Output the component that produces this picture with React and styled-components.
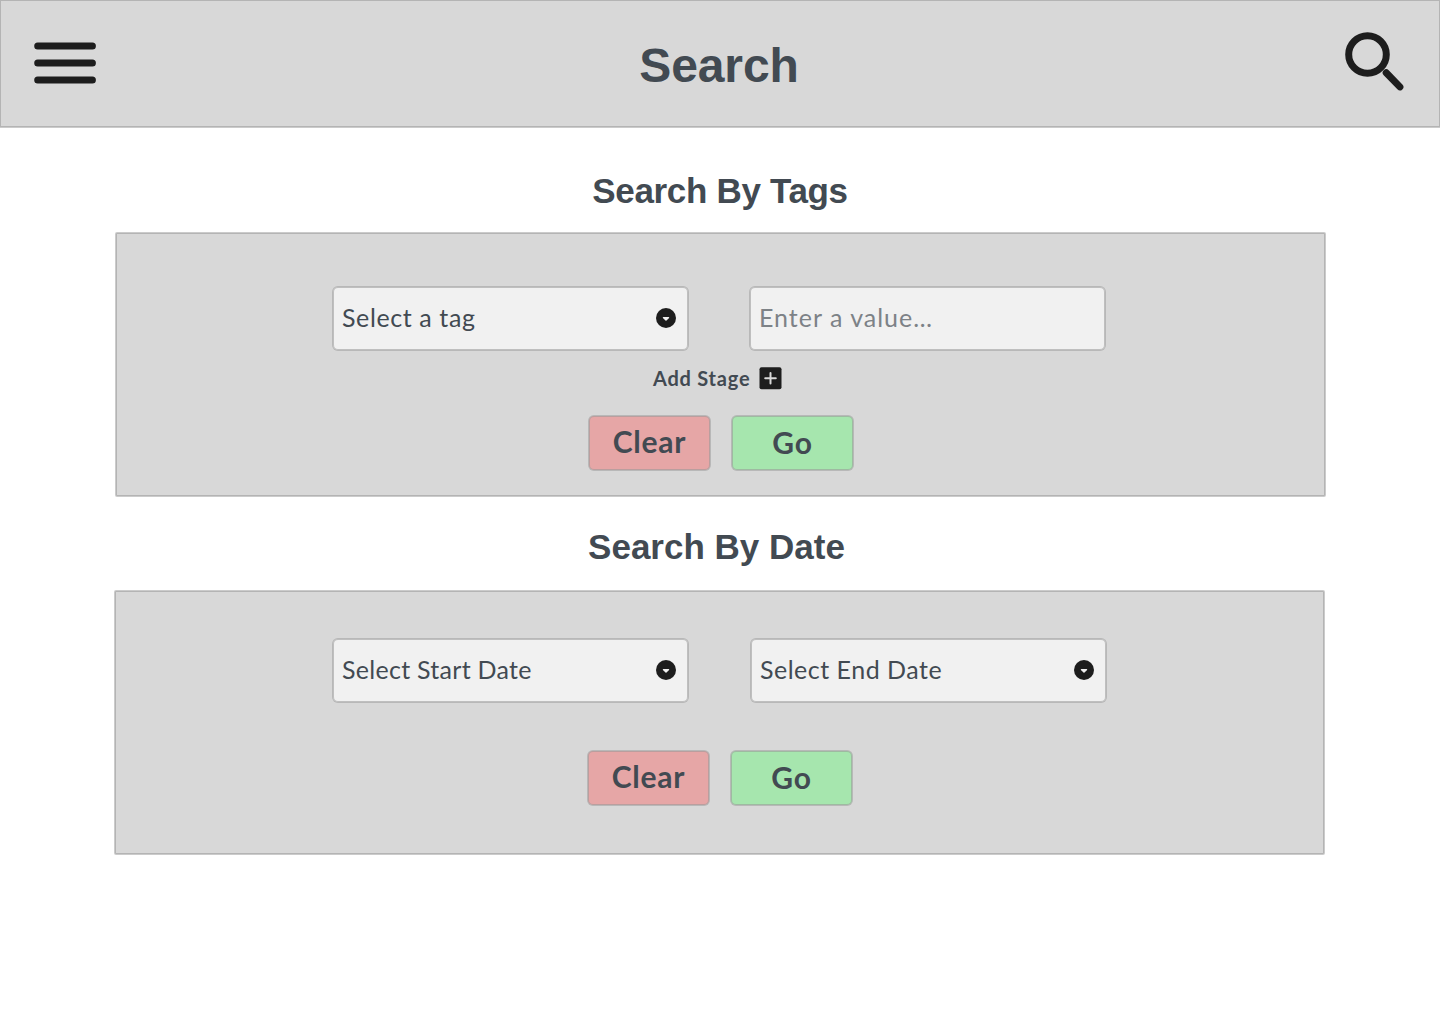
import React from 'react';
import styled, { createGlobalStyle } from 'styled-components';

const outline = '0 0 0 1px rgba(151,151,151,.5), inset 0 0 0 1px rgba(151,151,151,.56)';
const ink = '#424a52';

const GlobalStyle = createGlobalStyle`
  * { box-sizing: border-box; }
  body { margin: 0; background: #fff; color: ${ink}; font-family: Lato, "Open Sans", sans-serif; }
  button, input { font: inherit; color: inherit; border: 0; margin: 0; }
`;

const Page = styled.div`
  height: 1024px;
  overflow: hidden;
`;

const Header = styled.header`
  height: 127px;
  padding: 32px 36px 0 34px;
  display: flex;
  align-items: flex-start;
  justify-content: space-between;
  background: #d8d8d8;
  box-shadow: ${outline};
`;

const IconButton = styled.button`
  display: flex;
  padding: 0;
  background: none;
`;

const MenuButton = styled(IconButton)`
  margin-top: 10px;
`;

const Title = styled.h1`
  margin: 1px 2px 0 0;
  font: bold 48px/66px "Liberation Sans", Arial, sans-serif;
  letter-spacing: -0.1px;
`;

const Heading = styled.h2`
  margin: 0;
  padding-right: ${p => p.$shift}px;
  text-align: center;
  font: bold 35px/42px "Liberation Sans", Arial, sans-serif;
  letter-spacing: ${p => p.$spacing}px;
`;

const Section = styled.section`
  padding-top: ${p => p.$top}px;
`;

const Panel = styled.div`
  width: 1209px;
  height: 263px;
  margin: ${p => p.$top}px 0 0 ${p => p.$left}px;
  padding-top: ${p => p.$pad}px;
  background: #d8d8d8;
  border-radius: 1px;
  box-shadow: ${outline};
`;

const Fields = styled.div`
  display: flex;
  gap: ${p => p.$gap}px;
  padding-left: ${p => p.$left}px;
`;

const Field = styled.div`
  display: flex;
  align-items: center;
  justify-content: space-between;
  width: 355px;
  height: 63px;
  padding: 0 12px 4px 9px;
  background: #f1f1f1;
  border-radius: 5px;
  box-shadow: ${outline};
  font-size: 25px;
  font-weight: 400;
  letter-spacing: ${p => p.$spacing || 0}px;
`;

const ValueInput = styled.input`
  width: 100%;
  padding: 0;
  background: transparent;
  outline: none;
  letter-spacing: inherit;
  &::placeholder { color: #7d8287; opacity: 1; }
`;

const Chevron = styled.svg`
  margin-top: 2px;
`;

const AddStage = styled.button`
  display: flex;
  align-items: center;
  gap: 9px;
  height: 24px;
  margin: 16px 0 0 537px;
  padding: 0;
  background: none;
  font-size: 20px;
  font-weight: 700;
  letter-spacing: 0.77px;
  white-space: nowrap;
`;

const Actions = styled.div`
  display: flex;
  gap: 22px;
  padding: ${p => p.$top}px 0 0 473px;
`;

const Action = styled.button`
  width: 121px;
  height: 54px;
  padding: 0 0 ${p => p.$lift}px;
  background: ${p => p.$color};
  border-radius: 5px;
  box-shadow: ${outline};
  font-size: 30px;
  font-weight: 700;
  letter-spacing: 0.8px;
`;

const Select = ({ children, spacing }) => (
  <Field role="combobox" $spacing={spacing}>
    <span>{children}</span>
    <Chevron width="20" height="20" viewBox="0 0 20 20">
      <circle cx="10" cy="10" r="10" fill="#1d1d1d" />
      <path d="M7.3 9h5.4a.6.6 0 0 1 .4 1l-2.6 2.600a.8.8 0 0 1-1 0L6.900 10a.6.6 0 0 1 .4-1z" fill="#f1f1f1" />
    </Chevron>
  </Field>
);

const Buttons = ({ top }) => (
  <Actions $top={top}>
    <Action $color="#e6a6a6" $lift={4}>Clear</Action>
    <Action $color="#a6e6ae" $lift={2}>Go</Action>
  </Actions>
);

export default function App() {
  return (
    <Page>
      <GlobalStyle />
      <Header>
        <MenuButton aria-label="Menu">
          <svg width="62" height="42" viewBox="0 0 62 42" stroke="#1d1d1d" strokeWidth="7" strokeLinecap="round">
            <path d="M3.700 4h54.700M3.700 21h54.700M3.700 38h54.700" />
          </svg>
        </MenuButton>
        <Title>Search</Title>
        <IconButton aria-label="Search">
          <svg width="60" height="60" viewBox="0 0 60 60" fill="none" stroke="#1d1d1d" strokeWidth="7">
            <circle cx="23.500" cy="22.500" r="18.800" />
            <path d="M42.200 40.800L55.900 54.900" strokeLinecap="round" />
          </svg>
        </IconButton>
      </Header>
      <Section $top={43}>
        <Heading $shift={0} $spacing={-0.33}>Search By Tags</Heading>
        <Panel $top={21} $left={116} $pad={54}>
          <Fields $gap={62} $left={217}>
            <Select spacing={0.6}>Select a tag</Select>
            <Field $spacing={1}><ValueInput placeholder="Enter a value…" /></Field>
          </Fields>
          <AddStage>
            <span>Add Stage</span>
            <svg width="23" height="23" viewBox="0 0 23 23">
              <rect x="0.500" y="0.300" width="22" height="22" rx="2" fill="#1d1d1d" />
              <path d="M11.500 6v10.600M6.200 11.300h10.600" stroke="#d8d8d8" strokeWidth="2" strokeLinecap="round" />
            </svg>
          </AddStage>
          <Buttons top={26} />
        </Panel>
      </Section>
      <Section $top={30}>
        <Heading $shift={7} $spacing={0}>Search By Date</Heading>
        <Panel $top={23} $left={115} $pad={48}>
          <Fields $gap={63} $left={218}>
            <Select spacing={0.28}>Select Start Date</Select>
            <Select spacing={0.5}>Select End Date</Select>
          </Fields>
          <Buttons top={49} />
        </Panel>
      </Section>
    </Page>
  );
}
